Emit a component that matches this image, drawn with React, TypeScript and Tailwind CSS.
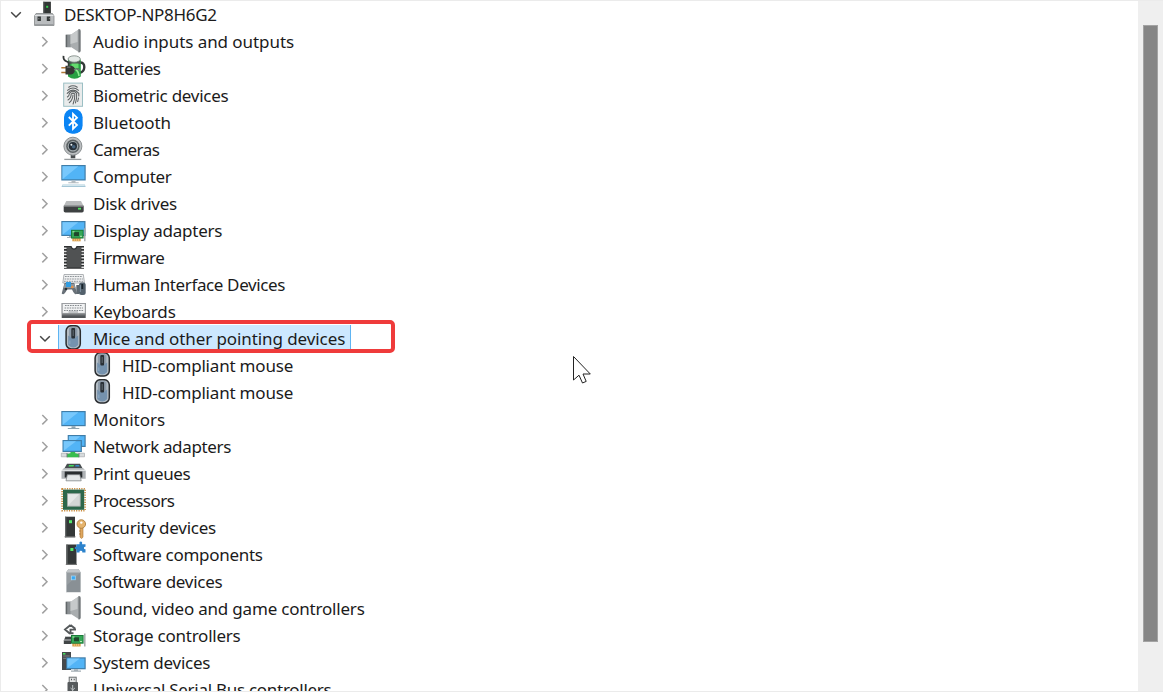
import React from "react";

type DeviceNode = {
  label: string;
  icon: React.ReactNode;
  level: number;
  state?: "open" | "closed";
  selected?: boolean;
  spacing?: string;
};

function Screen({ x, y, w, h }: { x: number; y: number; w: number; h: number }) {
  return (
    <>
      <rect x={x} y={y} width={w} height={h} fill="#3f7da8" />
      <rect x={x + 1.2} y={y + 1.2} width={w - 2.4} height={h - 2.4} fill="#52b4f6" />
      <path d={`M${x + 1.2} ${y + h - 1.2}V${y + 1.2}H${x + w * 0.7}Z`} fill="#78c8fc" />
    </>
  );
}

function Card({ y }: { y: number }) {
  return (
    <>
      <path d={`M12.3 ${y + 8}H20.7V${y + 11.5}H12.3Z`} fill="#d9a050" />
      <path d={`M14.5 ${y + 9}v2.5M16.5 ${y + 9}v2.5M18.5 ${y + 9}v2.5`} stroke="#f3cf91" strokeWidth=".6" />
      <rect x="11" y={y} width="12.6" height="8.7" fill="#197b39" />
      <rect x="12" y={y + 1} width="10.6" height="6.7" fill="#35a857" />
      <rect x="14" y={y + 2.3} width="5" height="4" fill="#20472c" />
      <path d={`M12.5 ${y + 2}h2M20 ${y + 6.5}h2`} stroke="#b6e7b0" strokeWidth="1" />
      <path d={`M24.8 ${y - 1.5}V${y + 11.5}`} stroke="#a6abad" strokeWidth="1.5" />
    </>
  );
}

function Tower({ x, y, w, h }: { x: number; y: number; w: number; h: number }) {
  return (
    <>
      <rect x={x} y={y} width={w} height={h} fill="#343838" />
      <rect x={x} y={y} width="1.3" height={h} fill="#656969" />
      <rect x={x + w * 0.4} y={y + 3.5} width="3" height="3" fill="#55e96c" />
      <path d={`M${x - 0.5} ${y + h - 0.5}h${w + 1}`} stroke="#777" strokeWidth="1" />
    </>
  );
}

const pc = (
  <>
    <rect x="12.3" y=".7" width="7.6" height="12" fill="#323635" />
    <path d="M12.8.7v12" stroke="#606564" />
    <rect x="15.2" y="4.8" width="2" height="2" fill="#33d34e" />
    <path d="M5 12.5H21.5L23 15V24.5H3.5V15Z" fill="#b9bcbe" stroke="#85898a" strokeWidth=".8" />
    <path d="M4 14.5H22.5" stroke="#e2e4e5" />
    <path d="M6.5 15.5h3.4v4.5h-3.4zM15.8 15.5h3.4v4.5h-3.4z" fill="#343838" />
    <path d="M7.2 17.7h1.2M17.8 17.7h1.2" stroke="#888" />
    <path d="M4 23.7H22.5" stroke="#929698" />
  </>
);

const speaker = (
  <>
    <path d="M5.7 6.5H11V19.3H5.7Z" fill="#8b9093" />
    <path d="M6.5 7V19" stroke="#626769" strokeWidth="1.4" />
    <path d="M10.5 7 19 1.2V24.3L10.5 18.8Z" fill="#a9adaf" />
    <path d="M10.5 7 17.5 2.3V14L10.5 16Z" fill="#c6c9ca" />
    <path d="M18.5 1q2.2-.3 2.2 2V22.5q0 2.3-2.2 2Z" fill="#74797b" />
  </>
);

const battery = (
  <>
    <path d="M19.5 7.5q5-.3 4.8 4.7-.2 4.8-5 5.5" fill="none" stroke="#333938" strokeWidth="2.4" />
    <path d="M8 4.5V21.5Q14.5 26 20.8 21.5V4.5Z" fill="#27a043" />
    <path d="M8.4 6V9H20.4V6Z" fill="#4a5a50" />
    <path d="M11.5 8.5V13H18.5V8.5Z" fill="#64dc6e" />
    <path d="M15 14q3.5 2 4 7" fill="none" stroke="#8ceb91" strokeWidth="1.6" />
    <ellipse cx="14.2" cy="4" rx="6.1" ry="3.2" fill="#e2e8e5" stroke="#76827c" strokeWidth=".8" />
    <path d="M3.5.8Q3 5 6.5 6.3 9.5 7 8.5 11" fill="none" stroke="#343838" strokeWidth="1.8" />
    <path d="M1.3 12.8H7M1.3 17.5H7" stroke="#b07938" strokeWidth="1.6" />
    <path d="M5.5 10.8H11q3.8.5 3.8 4.3T11 19.6H5.5Z" fill="#343735" />
    <path d="M7 12.2h3.5M14 15q3.5-2.5 5.5.5" fill="none" stroke="#707572" strokeWidth="1.2" />
  </>
);

const fingerprint = (
  <>
    <rect x="3.7" y="1.1" width="18.8" height="23.2" fill="#e9ebeb" stroke="#9bbfc4" />
    <g fill="none" stroke="#5c6163" strokeWidth="1.05" strokeLinecap="round">
      <path d="M8.7 5.2Q13 2.4 17.3 5.2M7.5 8.3Q13 3.8 18.5 8.3M7.2 11.4Q13 4.8 18.8 11.4V14" />
      <path d="M7.4 15q2-1.2 2-3.7 3.6-4 7.2 0 .5 4.7-1.1 9.6M8 18q3.2-1.9 3.2-6 1.8-1.8 3.6 0 .3 5-1.7 10M9.3 20.7q3.5-3 3.7-7.7M18.5 16l-.8 3.5" />
    </g>
  </>
);

const bluetooth = (
  <>
    <rect x="4" y="0" width="18.6" height="24.7" rx="8.2" fill="#0a84f4" />
    <path d="m8.8 8 8.2 8-4 3.8V4.9l4 3.8-8.2 8" fill="none" stroke="#fff" strokeWidth="1.8" />
  </>
);

const camera = (
  <>
    <path d="M10.7 18H15.3V22.3H10.7Z" fill="#494d4f" />
    <path d="M4.3 23.4H21.3" stroke="#999d9f" strokeWidth="1.3" />
    <circle cx="12.9" cy="10.2" r="9" fill="#bcbfc1" stroke="#8b9092" />
    <circle cx="12.9" cy="10.2" r="6.7" fill="#5a6062" />
    <circle cx="12.9" cy="10.2" r="5.2" fill="#a3abae" />
    <circle cx="12.9" cy="10.2" r="4.1" fill="#252f38" />
    <circle cx="13.7" cy="10.7" r="1.8" fill="#486681" />
    <circle cx="11.4" cy="8.7" r="1" fill="#e8f1f5" />
  </>
);

const computer = (
  <>
    <Screen x={1.3} y={2} w={24.4} h={15.5} />
    <path d="M11.5 17.5h4v1.8h3.2v1H8.3v-1h3.2Z" fill="#b3bcc1" />
    <path d="M2.5 21.4H24.8L25.7 24H1.5Z" fill="#a4c7d7" />
    <path d="M2.5 22.3H24.8" stroke="#eff7fa" strokeWidth=".8" />
  </>
);

const disk = (
  <>
    <path d="M6.3 11H21L23.6 16H3.7Z" fill="#b9bbbc" />
    <path d="M3.7 15.7H23.7V21Q23.7 22.4 22 22.4H5.4Q3.7 22.4 3.7 21Z" fill="#3e4142" />
    <path d="M4 16.2H23.4" stroke="#8d9091" />
    <rect x="18" y="17.8" width="3" height="1.8" fill="#4ee35e" />
  </>
);

const display = (
  <>
    <Screen x={1.3} y={4} w={24.2} h={15} />
    <path d="M9 19h4v2H7v-1h2Z" fill="#a9b2b8" />
    <Card y={12.8} />
  </>
);

const firmware = (
  <>
    <path d="M4 2H11.5q.5 2.4 2.5 2.4T16.5 2H24V24.7H4Z" fill="#2f3132" />
    <path d="M7 3h3.5q1 2.8 3.5 2.8T17.5 3H21V23.5H7Z" fill="#505253" />
    <path
      d="M4 4.2h2.6M4 7.4h2.6M4 10.6h2.6M4 13.8h2.6M4 17h2.6M4 20.2h2.6M4 23.2h2.6M21.4 4.2H24M21.4 7.4H24M21.4 10.6H24M21.4 13.8H24M21.4 17H24M21.4 20.2H24M21.4 23.2H24"
      stroke="#e3e3e3"
      strokeWidth="1.5"
    />
  </>
);

const keys = "M5 7.5H22.5M4.6 10H23M4 12.5H23.5";

const hid = (
  <>
    <path d="M4 3.5H23.3L24.5 12H2.8Z" fill="#f0f1f2" stroke="#9da1a4" strokeWidth=".8" />
    <path d="M5 5.5H22.5M4.6 8H23M4 10.3H23.5" stroke="#8f9599" strokeWidth="1" strokeDasharray="1.7 .8" />
    <path d="M4.5 12H14.3L17 22.5Q15 25 12 18.5H7Q4 25 1.7 22.5Z" fill="#697178" />
    <path d="M4.5 13H14L15.7 17H3.5Z" fill="#8f989f" />
    <path d="M6 11H11V16H6Z" fill="#319de1" />
    <circle cx="12.3" cy="16" r="1.3" fill="#e89145" />
    <circle cx="6" cy="18" r="1.3" fill="#292e31" />
    <path d="M16.3 14h3v9h-3z" fill="#5d6870" />
    <rect x="19" y="11.5" width="6.7" height="12.5" rx="2.5" fill="#53616c" />
    <path d="M22.3 13V18" stroke="#16222a" strokeWidth="1.8" />
    <path d="M20.3 14V21" stroke="#8195a5" />
  </>
);

const keyboard = (
  <>
    <rect x="1.7" y="5" width="24" height="15" fill="#525659" />
    <rect x="2.2" y="5.5" width="23" height="9.8" fill="#f1f2f3" stroke="#9c9fa2" strokeWidth=".8" />
    <path d={keys} stroke="#858b8f" strokeWidth="1.1" strokeDasharray="1.6 .9" />
    <path d="M8.5 14H18" stroke="#9a9fa3" strokeWidth="1" />
    <path d="M2 16.8H25.5" stroke="#8a8e91" strokeWidth="1" />
  </>
);

const mouse = (
  <>
    <rect x="6.1" y=".7" width="14.2" height="23.2" rx="5.2" fill="#b4bdc5" stroke="#2a2d30" strokeWidth="1.5" />
    <path d="M9 3Q13.2 0 17.4 3V12H9Z" fill="#8f9dab" />
    <path d="M8.2 10.5Q13.2 15 18.2 10.5V20Q13.2 25 8.2 20Z" fill="#7592ae" />
    <rect x="11.3" y="3" width="3.8" height="10.5" rx="1" fill="#2a3036" />
    <path d="M13.2 5V11" stroke="#626c75" strokeWidth="1" />
    <path d="M9.8 15.5V19" stroke="#8fadc6" />
  </>
);

const monitor = (
  <>
    <Screen x={1.3} y={5} w={24.4} h={15.2} />
    <path d="M11.5 20.2h4v1.8h3.8v1H7.8v-1h3.7Z" fill="#8fa4b0" />
  </>
);

const network = (
  <>
    <Screen x={7.7} y={2} w={18} h={12} />
    <Screen x={2.5} y={7} w={19.4} h={12} />
    <path d="M1.3 20.2H24.5V23.8H1.3Z" fill="#d7dbdd" stroke="#a7abad" strokeWidth=".7" />
    <path d="M10.5 19h4.7v1.3l3.8 1v3H7v-3l3.5-1Z" fill="#38bd4e" />
    <path d="M7 20V24.3M19 20V24.3" stroke="#6d7477" strokeWidth=".9" />
  </>
);

const printer = (
  <>
    <path d="M7 3.7H20L22.5 8.3H4.5Z" fill="#484d50" />
    <path d="M9 5H14L13.5 6.5H8.5Z" fill="#42da5e" />
    <path d="M15.5 5H19L19.6 6.5H15.2Z" fill="#3588c4" />
    <path d="M4 8H23L25.7 11V18.8H1.5V11Z" fill="#aeb2b5" />
    <path d="M2 10.3H25.2" stroke="#dfe2e3" strokeWidth="1.4" />
    <path d="M4.7 11.5H22.3V17.5H4.7Z" fill="#292d2f" />
    <path d="M7.3 14.7H19.8L21.2 20.8H6Z" fill="#e4e7e8" stroke="#828789" strokeWidth=".8" />
  </>
);

const processor = (
  <>
    <rect x="2.1" y="1.7" width="23" height="22" fill="none" stroke="#c98b3d" strokeWidth="1.6" strokeDasharray="1.2 1.2" />
    <rect x="3" y="2.6" width="21.2" height="20.2" fill="#2d674b" />
    <rect x="7.4" y="6.7" width="12.8" height="12.5" fill="#d4d6d6" stroke="#a4aaa7" strokeWidth=".8" />
    <path d="M8 18.7V7.2H19Z" fill="#e6e7e7" />
  </>
);

const security = (
  <>
    <Tower x={5} y={2.7} w={10} h={20.6} />
    <path d="M20 13h3v10.2l-1.5 1.3-1.5-1.3Z" fill="#dfa75f" stroke="#a97735" strokeWidth=".6" />
    <circle cx="21.3" cy="10" r="4.3" fill="#e5b36c" stroke="#a97735" strokeWidth=".8" />
    <circle cx="21.3" cy="8.6" r="1.2" fill="#fff" />
    <path d="M19 17h2M19 20h2" stroke="#b98344" strokeWidth="1.2" />
  </>
);

const components = (
  <>
    <Tower x={6.3} y={3.5} w={10.2} h={20.4} />
    <path
      d="M16.5 3.2h3V2.4q-.6-1.9 1.3-1.9t1.3 1.9v.8h3.4v2.6q-1.6-.2-1.6 1.2t1.6 1.2v3.4h-3.2v-.5q.3-1.4-1.4-1.4t-1.4 1.4v.5h-3V8.2q-1.8.1-1.8-1.2t1.8-1.2Z"
      fill="#2d83cc"
    />
  </>
);

const softwareDevice = (
  <>
    <path d="M8.5 1H18.5L20.7 4.5V24.2H6V4.5Z" fill="#969ca0" />
    <path d="M8.5 1H18.5L20.7 4.5H6Z" fill="#c3c7ca" />
    <path d="M6.5 5V24" stroke="#b8bdc0" />
    <path d="M7 24V17L20 5V24Z" fill="#899095" />
    <rect x="11.5" y="8" width="3.8" height="3.8" fill="#39a9f5" stroke="#a5daf8" strokeWidth=".7" />
  </>
);

const storage = (
  <>
    <path d="M10.5 3 5 7.6l5 4.2M10.5 3l4.8 3.8M16 7.6H10.5v3.6h3" fill="none" stroke="#55595b" strokeWidth="1.9" />
    <path d="M5.5 14.5H11V22H3.8V18.5Z" fill="#414547" />
    <path d="M5.5 14.5H11M4 18H11" stroke="#c3c6c7" strokeWidth="1.2" />
    <Card y={13} />
  </>
);

const system = (
  <>
    <rect x="2" y="3" width="9" height="18" fill="#46494b" />
    <path d="M3.2 7H9.7M3.2 9.3H6" stroke="#8e9294" strokeWidth=".8" />
    <rect x="3" y="4" width="2.4" height="1.6" fill="#4adc5e" />
    <Screen x={6.2} y={8.3} w={19.5} h={12} />
    <path d="M14 20.3h4v1.3h3v1.2H11v-1.2h3Z" fill="#a3adb4" />
  </>
);

const usb = (
  <>
    <rect x="9.2" y="1.2" width="7" height="6" fill="#e0e2e3" stroke="#6b6f71" />
    <path d="M11 3.5h1M13.7 3.5h1" stroke="#505456" strokeWidth="1.3" />
    <path d="M7.5 7Q7.5 6 8.5 6H17q1 0 1 1V20H7.5Z" fill="#565a5c" />
    <path d="M12.7 9v8M10.5 12l2.2 2 2.2-2" fill="none" stroke="#bfc4c7" strokeWidth="1" />
  </>
);

const devices: DeviceNode[] = [
  { label: "DESKTOP-NP8H6G2", icon: pc, level: 0, state: "open", spacing: "tracking-[-0.3px]" },
  { label: "Audio inputs and outputs", icon: speaker, level: 1, state: "closed", spacing: "tracking-[-0.06px]" },
  { label: "Batteries", icon: battery, level: 1, state: "closed", spacing: "tracking-[-0.45px]" },
  { label: "Biometric devices", icon: fingerprint, level: 1, state: "closed", spacing: "tracking-[-0.27px]" },
  { label: "Bluetooth", icon: bluetooth, level: 1, state: "closed", spacing: "tracking-[-0.1px]" },
  { label: "Cameras", icon: camera, level: 1, state: "closed", spacing: "tracking-[-0.55px]" },
  { label: "Computer", icon: computer, level: 1, state: "closed", spacing: "tracking-[-0.25px]" },
  { label: "Disk drives", icon: disk, level: 1, state: "closed", spacing: "tracking-[-0.25px]" },
  { label: "Display adapters", icon: display, level: 1, state: "closed", spacing: "tracking-[-0.26px]" },
  { label: "Firmware", icon: firmware, level: 1, state: "closed", spacing: "tracking-[-0.5px]" },
  { label: "Human Interface Devices", icon: hid, level: 1, state: "closed", spacing: "tracking-[-0.37px]" },
  { label: "Keyboards", icon: keyboard, level: 1, state: "closed", spacing: "tracking-[-0.15px]" },
  { label: "Mice and other pointing devices", icon: mouse, level: 1, state: "open", selected: true, spacing: "tracking-[-0.09px]" },
  { label: "HID-compliant mouse", icon: mouse, level: 2, spacing: "tracking-[-0.2px]" },
  { label: "HID-compliant mouse", icon: mouse, level: 2, spacing: "tracking-[-0.2px]" },
  { label: "Monitors", icon: monitor, level: 1, state: "closed" },
  { label: "Network adapters", icon: network, level: 1, state: "closed", spacing: "tracking-[-0.36px]" },
  { label: "Print queues", icon: printer, level: 1, state: "closed", spacing: "tracking-[-0.35px]" },
  { label: "Processors", icon: processor, level: 1, state: "closed", spacing: "tracking-[-0.55px]" },
  { label: "Security devices", icon: security, level: 1, state: "closed", spacing: "tracking-[-0.24px]" },
  { label: "Software components", icon: components, level: 1, state: "closed", spacing: "tracking-[-0.29px]" },
  { label: "Software devices", icon: softwareDevice, level: 1, state: "closed", spacing: "tracking-[-0.28px]" },
  { label: "Sound, video and game controllers", icon: speaker, level: 1, state: "closed", spacing: "tracking-[-0.2px]" },
  { label: "Storage controllers", icon: storage, level: 1, state: "closed", spacing: "tracking-[-0.24px]" },
  { label: "System devices", icon: system, level: 1, state: "closed", spacing: "tracking-[-0.26px]" },
  { label: "Universal Serial Bus controllers", icon: usb, level: 1, state: "closed", spacing: "tracking-[-0.28px]" },
];

const indents = ["pl-0", "pl-[29px]", "pl-[58px]"];

function Chevron({ state }: { state?: "open" | "closed" }) {
  return (
    <span className="flex h-full w-[29px] shrink-0 items-center justify-end">
      {state && (
        <svg className="shrink-0" width="27" height="27" viewBox="0 0 27 27" fill="none">
          {state === "open" ? (
            <path d="m9.2 11.3 4.8 4.7 4.8-4.7" stroke="#444" strokeWidth="1.5" />
          ) : (
            <path d="m11.3 9 4.7 4.7-4.7 4.7" stroke="#a0a0a0" strokeWidth="1.5" />
          )}
        </svg>
      )}
    </span>
  );
}

function DeviceRow({ node }: { node: DeviceNode }) {
  return (
    <li className={`flex h-[27px] shrink-0 ${indents[node.level]}`}>
      <Chevron state={node.state} />
      <div
        className={`flex h-[27px] items-start border-x pr-[5px] pl-px ${
          node.selected ? "border-[#5eb4f2] bg-[#cce8ff]" : "border-transparent"
        }`}
      >
        <svg className="shrink-0" width="26" height="26" viewBox="0 0 26 26">
          {node.icon}
        </svg>
        <span className={`ml-[7px] whitespace-nowrap leading-[27px] ${node.spacing ?? ""}`}>{node.label}</span>
      </div>
    </li>
  );
}

function App() {
  return (
    <div className="relative flex h-[692px] w-[1163px] overflow-hidden border-y border-l border-[#ebebeb] bg-white font-['Noto_Sans',sans-serif] text-[17px] text-[#1b1b1b]">
      <ul className="-ml-px flex flex-1 flex-col overflow-hidden">
        {devices.map((node, i) => (
          <DeviceRow key={i} node={node} />
        ))}
      </ul>

      {/* scrollbar */}
      <div className="w-[25px] shrink-0 bg-[#efefef] pt-6 pl-[5px]">
        <div className="h-[617px] w-[15px] border border-[#a3a3a3] bg-[#858585]" />
      </div>

      {/* highlighted category */}
      <div className="absolute top-[319px] left-[26px] h-[33px] w-[368px] rounded-[5px] border-4 border-[#ef3b3b]" />

      {/* pointer */}
      <svg className="absolute top-[354px] left-[571px]" width="20" height="30" viewBox="0 0 20 30">
        <path
          d="M1.5 1.5V25L7 20.2 10.5 28 14.2 26.4 11 19H18.3Z"
          fill="#fff"
          stroke="#222"
          strokeWidth="1"
        />
      </svg>
    </div>
  );
}

export default App;
